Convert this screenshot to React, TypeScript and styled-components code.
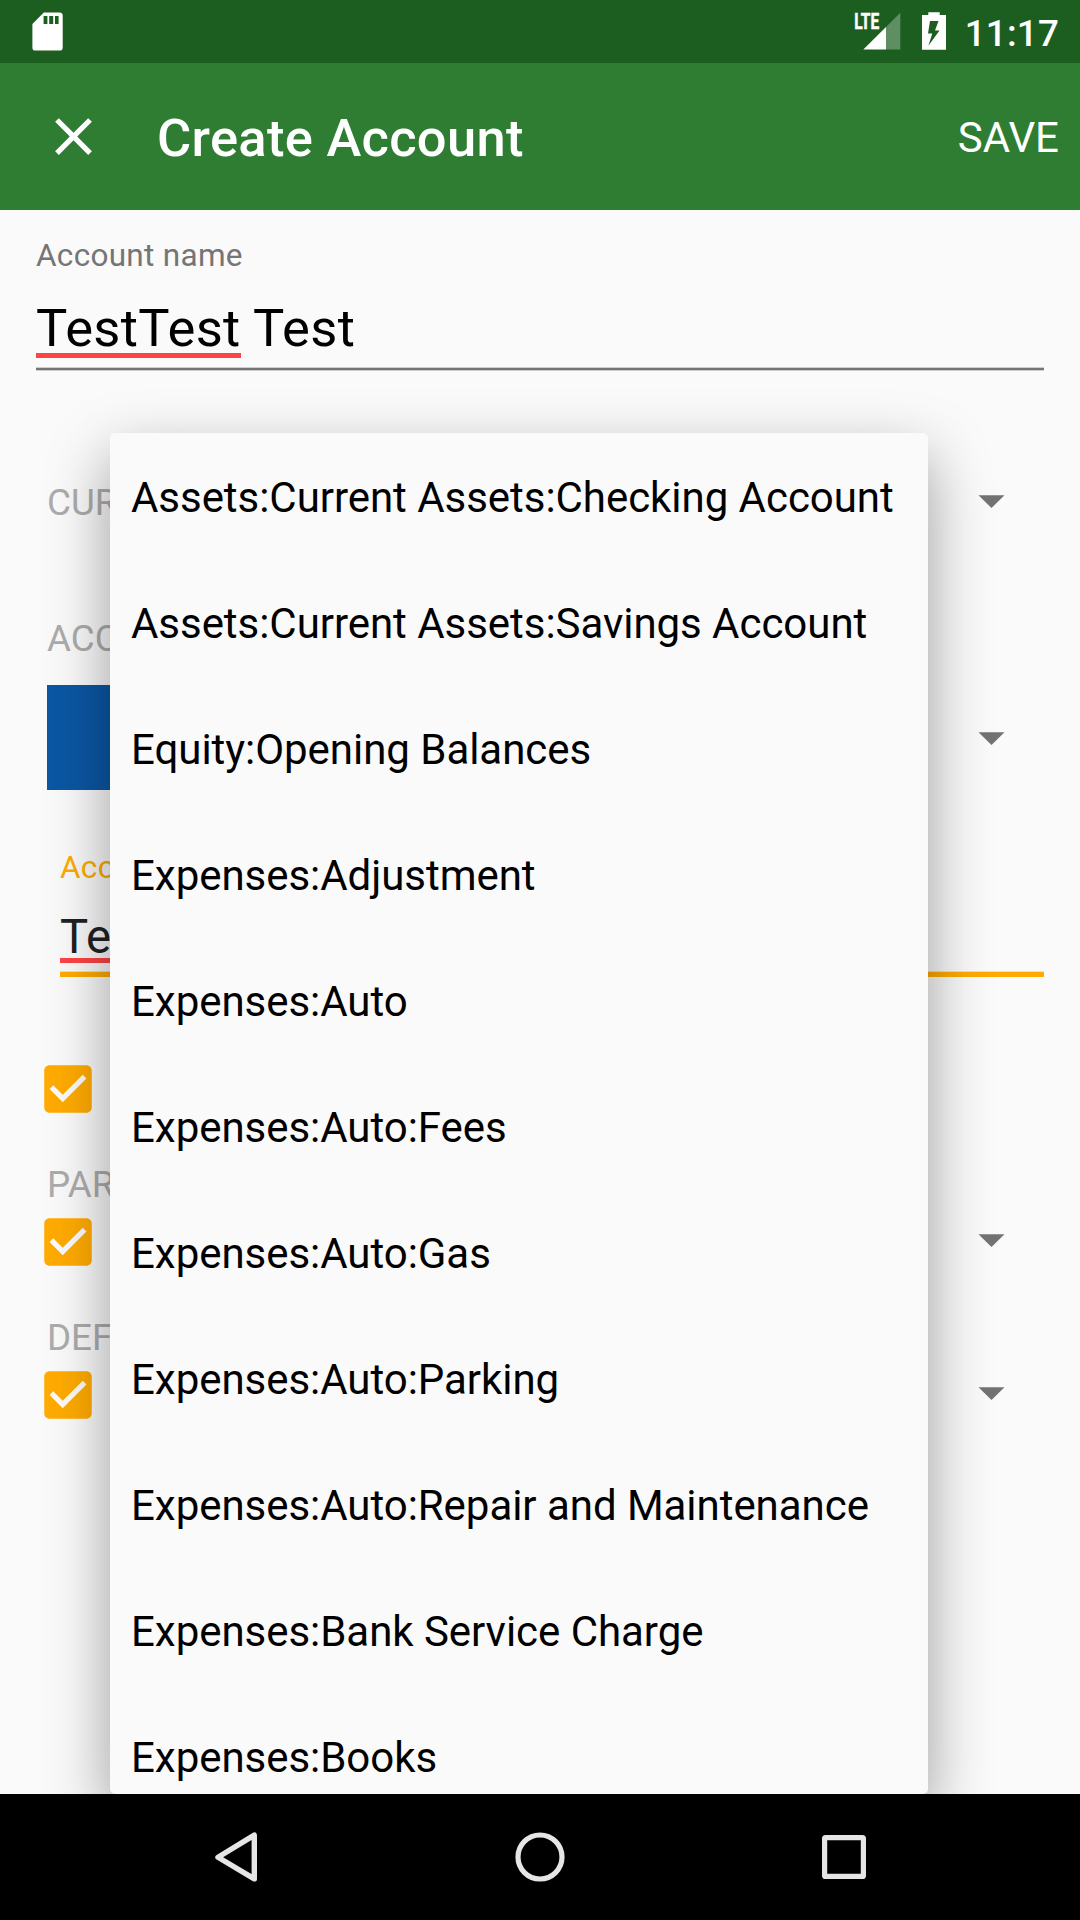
import React from "react";
import styled, { createGlobalStyle } from "styled-components";

const GlobalStyle = createGlobalStyle`
  * { box-sizing: border-box; }
  body {
    margin: 0;
    background: #fafafa;
    font-family: Roboto, "Liberation Sans", sans-serif;
    overflow: hidden;
  }
  svg { display: block; flex: none; }
`;

const Screen = styled.div`
  width: 1080px;
  height: 1920px;
  display: flex;
  flex-direction: column;
  background: #fafafa;
`;

const StatusBar = styled.header`
  height: 63px;
  flex: none;
  display: flex;
  align-items: flex-start;
  padding: 12px 21px 0 32px;
  background: #1b5e20;
  color: #fff;
`;

const StatusIcons = styled.div`
  margin-left: auto;
  display: flex;
  align-items: flex-start;
`;

const Clock = styled.span`
  margin: 1px 0 0 19px;
  font-size: 36.75px;
  line-height: 42px;
  font-weight: 500;
  letter-spacing: 0.2px;
`;

const BatterySlot = styled.span`
  margin-left: 21px;
`;

const AppBar = styled.div`
  height: 147px;
  flex: none;
  display: flex;
  align-items: center;
  padding: 0 21px 0 42px;
  background: #2e7d32;
  color: #fff;
`;

const Title = styled.h1`
  margin: 2px 0 0 52px;
  font-size: 52.5px;
  line-height: 62px;
  font-weight: 500;
  letter-spacing: 0.28px;
`;

const SaveButton = styled.button`
  margin: 2px 0 0 auto;
  padding: 0;
  border: 0;
  background: none;
  color: inherit;
  font: 400 42px/50px Roboto, "Liberation Sans", sans-serif;
`;

const Body = styled.main`
  position: relative;
  height: 1584px;
  flex: none;
  overflow: hidden;
`;

const Form = styled.form`
  display: flex;
  flex-direction: column;
  padding: 27px 36px 0;
`;

const Field = styled.div<{ $top?: number; $indent?: number }>`
  display: flex;
  flex-direction: column;
  margin: ${(p) => p.$top ?? 0}px 0 0 ${(p) => p.$indent ?? 0}px;
`;

const FieldLabel = styled.label<{ $color: string }>`
  font-size: 31.5px;
  line-height: 38px;
  letter-spacing: 0.3px;
  color: ${(p) => p.$color};
`;

const NameValue = styled.div`
  margin-top: 22px;
  font-size: 52.5px;
  line-height: 62px;
  height: 62px;
  letter-spacing: 0.35px;
  color: #000;
`;

const DescriptionValue = styled.div`
  margin-top: 22px;
  font-size: 47.25px;
  line-height: 56px;
  height: 56px;
  color: #212121;
`;

const Misspelled = styled.span<{ $offset: number }>`
  display: inline-block;
  background: linear-gradient(#ff4444, #ff4444) 0 ${(p) => p.$offset}px / 100% 5px no-repeat;
`;

const NameLine = styled.div`
  margin-top: 8px;
  height: 4px;
  background: #757575;
  border: solid #cecece;
  border-width: 1px 0;
`;

const DescriptionLine = styled.div`
  margin-top: 6px;
  height: 6px;
  background: #ffab00;
  border-top: 1px solid #f0e0bd;
`;

const SectionLabel = styled.div<{ $top: number }>`
  margin: ${(p) => p.$top}px 0 0 11px;
  font-size: 36.75px;
  line-height: 44px;
  color: #acacac;
`;

const Row = styled.div<{ $top: number; $height: number; $indent?: number }>`
  display: flex;
  align-items: center;
  justify-content: space-between;
  height: ${(p) => p.$height}px;
  margin-top: ${(p) => p.$top}px;
  padding: 0 39px 0 ${(p) => p.$indent ?? 8}px;
`;

const RowText = styled.span`
  font-size: 36.75px;
  line-height: 44px;
  color: #acacac;
`;

const Swatch = styled.div`
  width: 420px;
  height: 105px;
  background: #0b57a4;
`;

const ArrowBox = styled.span<{ $lift?: number }>`
  margin-bottom: ${(p) => p.$lift ?? 0}px;
`;

const Popup = styled.ul`
  position: absolute;
  left: 110px;
  top: 223px;
  width: 818px;
  height: 1361px;
  margin: 0;
  padding: 2px 0 0;
  list-style: none;
  border-radius: 5px;
  background: #fafafa;
  box-shadow: 0 24px 62px rgba(0, 0, 0, 0.38);
`;

const Option = styled.li`
  height: 126px;
  padding-left: 21px;
  font-size: 42px;
  line-height: 126px;
  letter-spacing: -0.04px;
  color: #000;
  white-space: nowrap;
`;

const NavBar = styled.nav`
  height: 126px;
  flex: none;
  display: flex;
  align-items: center;
  justify-content: space-between;
  padding: 0 204px;
  background: #000;
`;

const SdCard = () => (
  <svg width="32" height="40" viewBox="32 12 32 40">
    <path
      fill="#fff"
      fillRule="evenodd"
      d="M43.8 12.6H59.5Q62.7 12.6 62.7 15.8V47.4Q62.7 50.6 59.5 50.6H35.6Q32.4 50.6 32.4 47.4V24ZM43.6 16V24H47.4V16ZM49.2 16V24H53.2V16ZM55 16V24H58.6V16Z"
    />
  </svg>
);

const Signal = () => (
  <svg width="51" height="39" viewBox="850 12 51 39" overflow="visible">
    <text
      x="854.2"
      y="29.2"
      fill="#fff"
      stroke="#fff"
      strokeWidth="0.5"
      fontSize="22"
      fontWeight="700"
      fontFamily="Roboto, sans-serif"
      textLength="25"
      lengthAdjust="spacingAndGlyphs"
    >
      LTE
    </text>
    <path fill="#fff" d="M863.3 49.6L886 27V49.6Z" />
    <path fill="#fff" fillOpacity="0.3" d="M886 27L900.3 12.8V49.6H886Z" />
  </svg>
);

const Battery = () => (
  <svg width="24" height="39" viewBox="922 12 24 39">
    <path
      fill="#fff"
      fillRule="evenodd"
      d="M928.3 12.3H939.7V15H946V49.8H922V15H928.3ZM930 21L928 33.5H932.3L928.4 45.8L939.5 30.5H935L938.5 21Z"
    />
  </svg>
);

const Close = () => (
  <svg width="63" height="63" viewBox="0 0 24 24" fill="#fff">
    <path d="M19 6.41L17.59 5 12 10.59 6.41 5 5 6.41 10.59 12 5 17.59 6.41 19 12 13.41 17.59 19 19 17.59 13.41 12z" />
  </svg>
);

const Checkbox = () => (
  <svg width="48" height="48" viewBox="2.9 2.9 18.2 18.2" fill="#ffab00">
    <path d="M19 3H5c-1.11 0-2 .9-2 2v14c0 1.1.89 2 2 2h14c1.11 0 2-.9 2-2V5c0-1.1-.89-2-2-2zm-9 14l-5-5 1.41-1.41L10 14.17l7.59-7.59L19 8l-9 9z" />
  </svg>
);

const Arrow = ({ lift }: { lift?: number }) => (
  <ArrowBox $lift={lift}>
    <svg width="27" height="13" viewBox="0 0 27 13">
      <path fill="#737373" d="M0.5 0.2H26.5L13.5 13Z" />
    </svg>
  </ArrowBox>
);

const OPTIONS = [
  "Assets:Current Assets:Checking Account",
  "Assets:Current Assets:Savings Account",
  "Equity:Opening Balances",
  "Expenses:Adjustment",
  "Expenses:Auto",
  "Expenses:Auto:Fees",
  "Expenses:Auto:Gas",
  "Expenses:Auto:Parking",
  "Expenses:Auto:Repair and Maintenance",
  "Expenses:Bank Service Charge",
  "Expenses:Books",
];

export default function App() {
  return (
    <Screen>
      <GlobalStyle />
      <StatusBar>
        <SdCard />
        <StatusIcons>
          <Signal />
          <BatterySlot>
            <Battery />
          </BatterySlot>
          <Clock>11:17</Clock>
        </StatusIcons>
      </StatusBar>
      <AppBar>
        <Close />
        <Title>Create Account</Title>
        <SaveButton>SAVE</SaveButton>
      </AppBar>
      <Body>
        <Form>
          <Field>
            <FieldLabel $color="#757575">Account name</FieldLabel>
            <NameValue>
              <Misspelled $offset={56}>TestTest</Misspelled> Test
            </NameValue>
            <NameLine />
          </Field>
          <Row $top={110} $height={44} $indent={11}>
            <RowText>CURRENCY</RowText>
            <Arrow lift={3} />
          </Row>
          <SectionLabel $top={92}>ACCOUNT COLOR</SectionLabel>
          <Row $top={24} $height={105} $indent={11}>
            <Swatch />
            <Arrow lift={-2} />
          </Row>
          <Field $top={59} $indent={24}>
            <FieldLabel $color="#ffab00">Account description</FieldLabel>
            <DescriptionValue>
              <Misspelled $offset={49}>TestTest</Misspelled>
            </DescriptionValue>
            <DescriptionLine />
          </Field>
          <Row $top={88} $height={48}>
            <Checkbox />
          </Row>
          <SectionLabel $top={50}>PARENT ACCOUNT</SectionLabel>
          <Row $top={11} $height={48}>
            <Checkbox />
            <Arrow lift={3} />
          </Row>
          <SectionLabel $top={50}>DEFAULT TRANSFER ACCOUNT</SectionLabel>
          <Row $top={11} $height={48}>
            <Checkbox />
            <Arrow lift={3} />
          </Row>
        </Form>
        <Popup>
          {OPTIONS.map((name) => (
            <Option key={name}>{name}</Option>
          ))}
        </Popup>
      </Body>
      <NavBar>
        <svg width="64" height="64" viewBox="204 1825 64 64">
          <path
            d="M254.3 1835.1V1878.9L218 1857.2Z"
            fill="none"
            stroke="#e6e6e6"
            strokeWidth="5.4"
            strokeLinejoin="round"
          />
        </svg>
        <svg width="64" height="64" viewBox="508 1825 64 64">
          <circle cx="540" cy="1857" r="22" fill="none" stroke="#e6e6e6" strokeWidth="5.2" />
        </svg>
        <svg width="64" height="64" viewBox="812 1825 64 64">
          <rect x="824.6" y="1837.6" width="38.8" height="38.8" rx="1" fill="none" stroke="#e6e6e6" strokeWidth="5.2" />
        </svg>
      </NavBar>
    </Screen>
  );
}
